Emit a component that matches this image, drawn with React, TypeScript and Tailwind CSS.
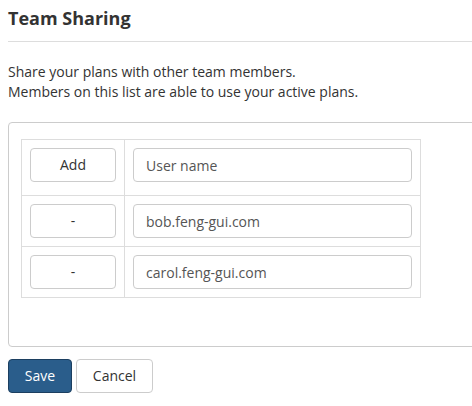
const members = ["bob.feng-gui.com", "carol.feng-gui.com"];

export default function App() {
  return (
    <div
      className="w-[472px] h-[406px] overflow-hidden bg-white text-[#333] text-[14px] leading-[20px]"
      style={{ fontFamily: '"Open Sans", "Liberation Sans", sans-serif' }}
    >
      <div className="pl-2 w-[560px]">
        <h2 className="pt-[5px] text-[18px] leading-[26px] font-bold text-[#333]">Team Sharing</h2>
        <hr className="mt-[10px] border-0 border-t border-[#ddd]" />

        <p className="mt-[20px]">
          Share your plans with other team members.
          <br />
          Members on this list are able to use your active plans.
        </p>

        {/* Members panel */}
        <div className="mt-[20px] w-[480px] h-[225px] border border-[#ccc] rounded-[4px] pt-4 pl-3">
          <table className="border-collapse">
            <tbody>
              <tr>
                <td className="border border-[#ddd] px-2 pt-2 pb-[13px] w-[103px]">
                  <button className="w-[86px] h-[34px] border border-[#ccc] rounded-[4px] bg-white text-[#333]">
                    Add
                  </button>
                </td>
                <td className="border border-[#ddd] px-2 pt-2 pb-[13px]">
                  <input
                    className="w-[279px] h-[34px] px-3 border border-[#ccc] rounded-[4px] text-[#555] placeholder:text-[#555] outline-none"
                    placeholder="User name"
                  />
                </td>
              </tr>
              {members.map((m) => (
                <tr key={m}>
                  <td className="border border-[#ddd] p-2">
                    <button className="w-[86px] h-[34px] border border-[#ccc] rounded-[4px] bg-white text-[#333]">
                      -
                    </button>
                  </td>
                  <td className="border border-[#ddd] p-2">
                    <input
                      className="w-[279px] h-[34px] px-3 border border-[#ccc] rounded-[4px] text-[#555] outline-none"
                      defaultValue={m}
                    />
                  </td>
                </tr>
              ))}
            </tbody>
          </table>
        </div>

        <div className="mt-3 flex gap-1">
          <button className="w-[64px] h-[34px] rounded-[4px] bg-[#2a5d8b] border border-[#1c3f60] text-white">
            Save
          </button>
          <button className="w-[77px] h-[34px] rounded-[4px] bg-white border border-[#ccc] text-[#333]">
            Cancel
          </button>
        </div>
      </div>
    </div>
  );
}
